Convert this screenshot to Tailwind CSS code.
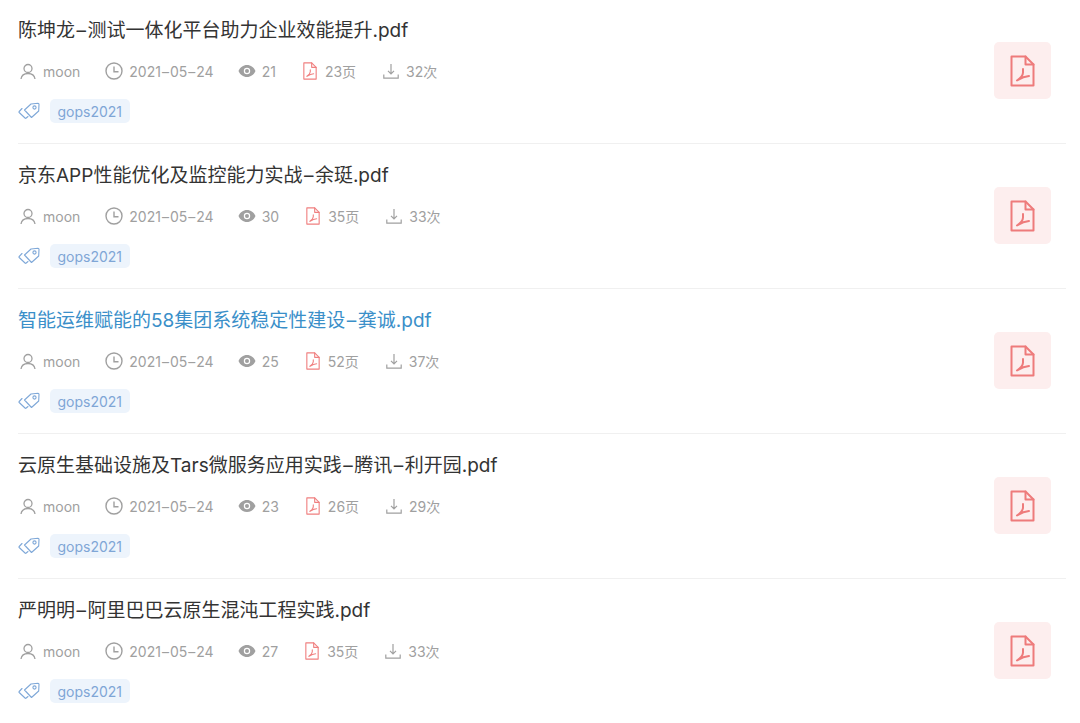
<!DOCTYPE html>
<html lang="en">
<head>
    <meta charset="UTF-8">
    <meta name="viewport" content="width=device-width, initial-scale=1.0">
    <title>文档列表</title>
    <script src="https://cdn.jsdelivr.net/npm/@tailwindcss/browser@4"></script>
</head>
<body class="bg-white overflow-hidden font-['Inter','Noto_Sans_CJK_SC',sans-serif]">
    <div id="list" class="-mt-px ml-[18px] mr-[14px]"></div>

    <script>
        const docs = [
            { title: "陈坤龙–测试一体化平台助力企业效能提升.pdf", views: 21, pages: 23, downloads: 32 },
            { title: "京东APP性能优化及监控能力实战–余珽.pdf", views: 30, pages: 35, downloads: 33 },
            { title: "智能运维赋能的58集团系统稳定性建设–龚诚.pdf", views: 25, pages: 52, downloads: 37, active: true },
            { title: "云原生基础设施及Tars微服务应用实践–腾讯–利开园.pdf", views: 23, pages: 26, downloads: 29 },
            { title: "严明明–阿里巴巴云原生混沌工程实践.pdf", views: 27, pages: 35, downloads: 33 }
        ];

        // the dash sits wider in the original font
        const wideDash = text => text.replaceAll("–", `<span class="mx-[1.500px]">–</span>`);

        // same outline for the small meta icon and the big one on the right
        const pdfPath = `<g fill="none" stroke="currentColor" stroke-width="2" stroke-linejoin="round" stroke-linecap="round"><path d="M1.500 1.500h14l8 8v21h-22z"/><path d="M15.500 1.500v8h8"/><path d="M13 14v3.500c0 2-2.500 5.500-6 8M8 25c3-2 6-3.500 11-4"/></g>`;

        document.getElementById("list").innerHTML = docs.map(doc => `
            <div class="h-[145px] border-b border-[#f0f0f0] flex justify-between">
                <div>
                    <h3 class="pt-[18px] text-[19px] leading-[27px] ${doc.active ? 'text-[#3a8fc9]' : 'text-[#333333]'}">${wideDash(doc.title)}</h3>
                    <div class="mt-[13px] h-[28px] flex items-center text-[14px] text-[#a0a0a0]">
                        <svg class="w-[16px] h-[17px] ml-[2px] mr-[7px]" viewBox="0 0 16 17" fill="none" stroke="currentColor" stroke-width="1.300"><circle cx="8" cy="5.500" r="4"/><path d="M1 16c.5-3.500 3.200-5.500 7-5.500s6.500 2 7 5.500"/></svg>
                        <span class="mr-[25px]">moon</span>
                        <svg class="w-[18px] h-[18px] mr-[6px]" viewBox="0 0 18 18" fill="none" stroke="currentColor" stroke-width="1.400"><circle cx="9" cy="9" r="8"/><path d="M9 4.500V9.800h4.500"/></svg>
                        <span class="mr-[24px]">2021<span class="mx-[1px]">–</span>05<span class="mx-[1px]">–</span>24</span>
                        <svg class="w-[18px] h-[18px] mr-[6px]" viewBox="0 0 18 18" fill="currentColor"><path fill-rule="evenodd" d="M9 3c3.800 0 7 2.500 8.500 6c-1.500 3.500-4.700 6-8.500 6S2 12.500.5 9C2 5.500 5.200 3 9 3zm0 2.800a3.200 3.200 0 100 6.400 3.200 3.200 0 000-6.400zm0 1.200a2 2 0 110 4 2 2 0 010-4z"/></svg>
                        <span class="mr-[27px]">${doc.views}</span>
                        <svg class="w-[14px] h-[18px] mr-[8px] text-[#f08080]" viewBox="0 0 25 32">${pdfPath}</svg>
                        <span class="mr-[27px]">${doc.pages}页</span>
                        <svg class="w-[16px] h-[16px] mr-[7px]" viewBox="0 0 16 16" fill="none" stroke="currentColor" stroke-width="1.200"><path d="M8 1v9.500M5 7.800l3 3 3-3M.8 11.500v3.700h14.400v-3.700"/></svg>
                        <span>${doc.downloads}次</span>
                    </div>
                    <div class="mt-[14px] flex items-center">
                        <svg class="w-[22px] h-[18px] mr-[10px] text-[#7fa8d8]" viewBox="0 0 22 18" fill="none" stroke="currentColor" stroke-width="1.100" stroke-linejoin="round" stroke-linecap="round"><path d="M6.500 8L13 2l7-.8c.6 0 1 .4 1 1l-.3 6.800L13.500 15.500z"/><path d="M4 6.500L1.200 9.500c-.3.3-.3.7 0 1l5.800 5.500c.4.4.8.4 1.200 0L10 14.500"/><circle cx="16.500" cy="5.500" r="1.600"/></svg>
                        <span class="h-[24px] px-[7.500px] flex items-center rounded-[5px] bg-[#edf4fc] text-[#7fa6d6] text-[14px]">gops2021</span>
                    </div>
                </div>
                <div class="mt-[43px] mr-[15px] w-[57px] h-[57px] rounded-[5px] bg-[#fdeeee] flex items-center justify-center text-[#ee7b7b]">
                    <svg class="w-[25px] h-[32px]" viewBox="0 0 25 32">${pdfPath}</svg>
                </div>
            </div>`).join('');
    </script>
</body>
</html>
